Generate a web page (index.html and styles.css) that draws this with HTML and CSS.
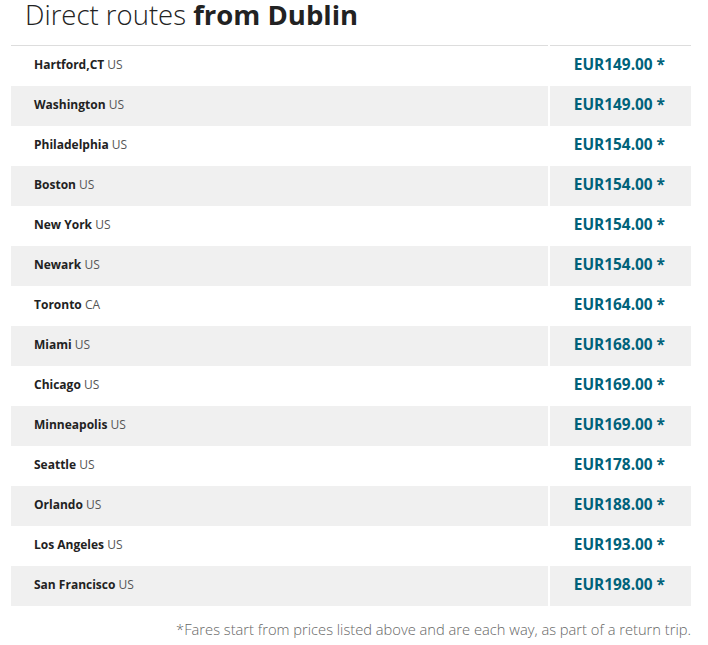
FILE: index.html
```html
<!DOCTYPE html>
<html>
  <head>
    <title>Direct routes from Dublin</title>
    <link rel="stylesheet" href="styles.css">
  </head>
  <body>
    <div class="page">
      <h2 class="title">Direct routes <b>from Dublin</b></h2>
      <table class="routes">
        <tr><td class="city"><b>Hartford,CT</b> US</td><td class="price">EUR149.00 *</td></tr>
        <tr><td class="city"><b>Washington</b> US</td><td class="price">EUR149.00 *</td></tr>
        <tr><td class="city"><b>Philadelphia</b> US</td><td class="price">EUR154.00 *</td></tr>
        <tr><td class="city"><b>Boston</b> US</td><td class="price">EUR154.00 *</td></tr>
        <tr><td class="city"><b>New York</b> US</td><td class="price">EUR154.00 *</td></tr>
        <tr><td class="city"><b>Newark</b> US</td><td class="price">EUR154.00 *</td></tr>
        <tr><td class="city"><b>Toronto</b> CA</td><td class="price">EUR164.00 *</td></tr>
        <tr><td class="city"><b>Miami</b> US</td><td class="price">EUR168.00 *</td></tr>
        <tr><td class="city"><b>Chicago</b> US</td><td class="price">EUR169.00 *</td></tr>
        <tr><td class="city"><b>Minneapolis</b> US</td><td class="price">EUR169.00 *</td></tr>
        <tr><td class="city"><b>Seattle</b> US</td><td class="price">EUR178.00 *</td></tr>
        <tr><td class="city"><b>Orlando</b> US</td><td class="price">EUR188.00 *</td></tr>
        <tr><td class="city"><b>Los Angeles</b> US</td><td class="price">EUR193.00 *</td></tr>
        <tr><td class="city"><b>San Francisco</b> US</td><td class="price">EUR198.00 *</td></tr>
      </table>
      <p class="note">*Fares start from prices listed above and are each way, as part of a return trip.</p>
    </div>
  </body>
</html>
```

FILE: styles.css
```css
body {
  margin: 0;
  padding: 0;
  background-color: #fff;
  font-family: "Open Sans", "Noto Sans", sans-serif;
  color: #222;
}

.page {
  width: 680px;
  margin-left: 11px;
}

.title {
  margin: 0;
  padding-left: 14px;
  height: 45px;
  font-size: 27.5px;
  font-weight: 300;
  line-height: 30px;
  color: #222;
}

.title b {
  font-weight: 700;
}

.routes {
  width: 680px;
  border-collapse: collapse;
  border-top: 1px solid #ddd;
}

.routes tr {
  height: 40px;
}

.routes tr:nth-child(even) {
  background-color: #f0f0f0;
}

.routes td {
  padding: 0 0 3px 0;
}

.city {
  padding-left: 23px !important;
  font-size: 12px;
  color: #555;
}

.city b {
  color: #222;
}

.price {
  width: 115px;
  padding-right: 26px !important;
  border-left: 2px solid #fff;
  text-align: right;
  font-size: 15.4px;
  font-weight: 700;
  color: #00627a;
}

.note {
  margin: 13px 0 0 0;
  text-align: right;
  font-size: 14.7px;
  font-weight: 300;
  color: #666;
}
```
